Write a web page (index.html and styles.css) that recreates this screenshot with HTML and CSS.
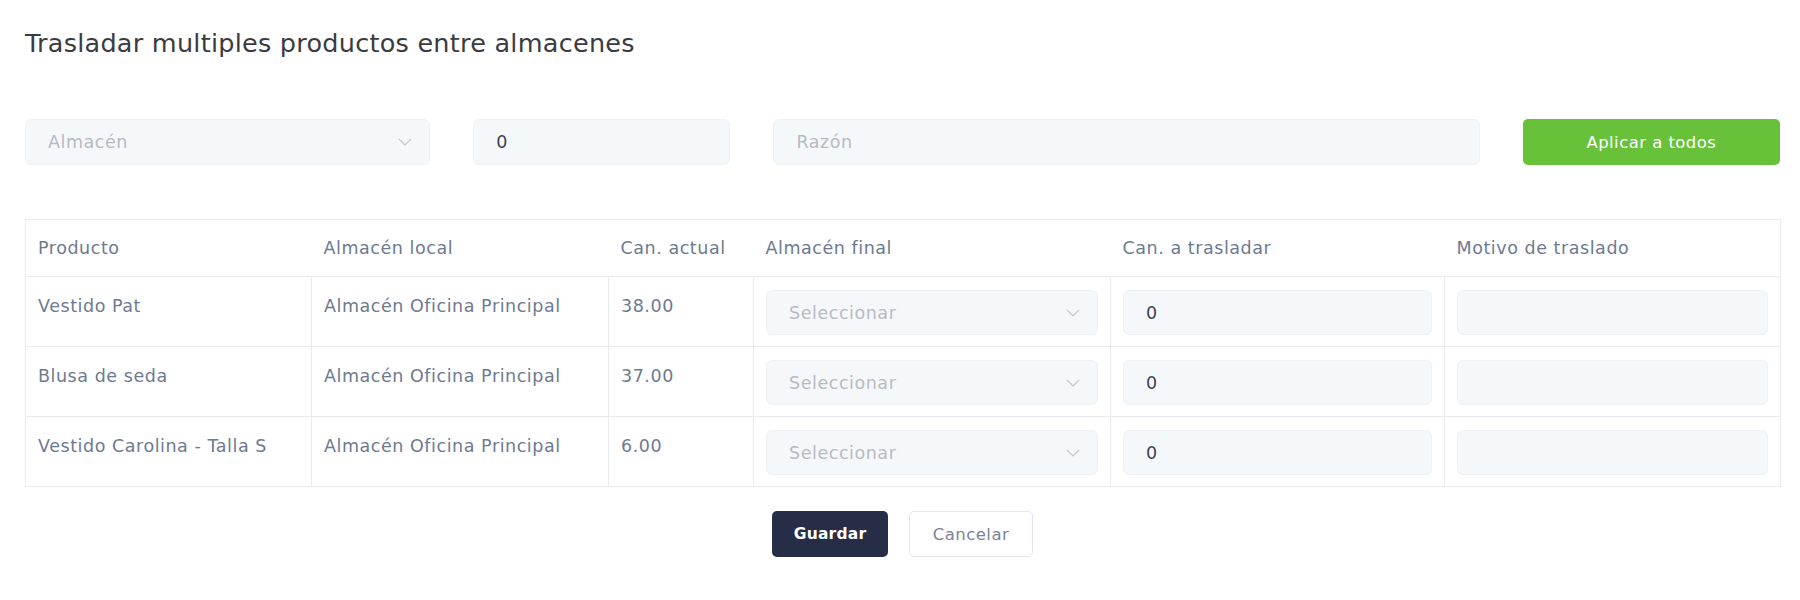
FILE: index.html
```html
<!DOCTYPE html>
<html lang="es">
<head>
<meta charset="utf-8">
<title>Trasladar multiples productos entre almacenes</title>
<link rel="stylesheet" href="styles.css">
</head>
<body>
<div class="page">
  <h1 class="title">Trasladar multiples productos entre almacenes</h1>

  <div class="filters">
    <div class="field select">
      <span class="placeholder">Almacén</span>
      <svg class="chev" width="14" height="8" viewBox="0 0 14 8"><polyline points="1,1 7,7 13,1" fill="none" stroke="#c4c6d0" stroke-width="1.2"/></svg>
    </div>
    <div class="field"><span class="value">0</span></div>
    <div class="field"><span class="placeholder">Razón</span></div>
    <button class="btn btn-green">Aplicar a todos</button>
  </div>

  <table class="grid">
    <colgroup>
      <col class="c1"><col class="c2"><col class="c3"><col class="c4"><col class="c5"><col class="c6">
    </colgroup>
    <thead>
      <tr>
        <th>Producto</th>
        <th>Almacén local</th>
        <th>Can. actual</th>
        <th>Almacén final</th>
        <th>Can. a trasladar</th>
        <th>Motivo de traslado</th>
      </tr>
    </thead>
    <tbody>
      <tr>
        <td class="txt">Vestido Pat</td>
        <td class="txt">Almacén Oficina Principal</td>
        <td class="txt">38.00</td>
        <td><div class="field select"><span class="placeholder">Seleccionar</span><svg class="chev" width="14" height="8" viewBox="0 0 14 8"><polyline points="1,1 7,7 13,1" fill="none" stroke="#c4c6d0" stroke-width="1.2"/></svg></div></td>
        <td><div class="field"><span class="value">0</span></div></td>
        <td><div class="field"></div></td>
      </tr>
      <tr>
        <td class="txt">Blusa de seda</td>
        <td class="txt">Almacén Oficina Principal</td>
        <td class="txt">37.00</td>
        <td><div class="field select"><span class="placeholder">Seleccionar</span><svg class="chev" width="14" height="8" viewBox="0 0 14 8"><polyline points="1,1 7,7 13,1" fill="none" stroke="#c4c6d0" stroke-width="1.2"/></svg></div></td>
        <td><div class="field"><span class="value">0</span></div></td>
        <td><div class="field"></div></td>
      </tr>
      <tr>
        <td class="txt">Vestido Carolina - Talla S</td>
        <td class="txt">Almacén Oficina Principal</td>
        <td class="txt">6.00</td>
        <td><div class="field select"><span class="placeholder">Seleccionar</span><svg class="chev" width="14" height="8" viewBox="0 0 14 8"><polyline points="1,1 7,7 13,1" fill="none" stroke="#c4c6d0" stroke-width="1.2"/></svg></div></td>
        <td><div class="field"><span class="value">0</span></div></td>
        <td><div class="field"></div></td>
      </tr>
    </tbody>
  </table>

  <div class="actions">
    <button class="btn btn-dark">Guardar</button>
    <button class="btn btn-light">Cancelar</button>
  </div>
</div>
</body>
</html>
```

FILE: styles.css
```css
* { box-sizing: border-box; }

html, body {
  margin: 0;
  padding: 0;
  background: #ffffff;
}

body {
  font-family: "DejaVu Sans", "Open Sans", sans-serif;
  font-size: 17.5px;
  letter-spacing: 0.55px;
  color: #6d7a92;
}

.page {
  width: 1800px;
  padding: 29px 20px 0 25px;
}

.title {
  margin: 0;
  font-size: 25.5px;
  letter-spacing: 0.25px;
  line-height: 29px;
  font-weight: 400;
  color: #3b3b40;
}

.filters {
  margin-top: 61px;
  display: grid;
  grid-template-columns: 405fr 257fr 706fr 257fr;
  column-gap: 43px;
}

.field {
  height: 46px;
  display: flex;
  align-items: center;
  padding: 0 17px 0 22px;
  background: #f5f8fa;
  border: 1px solid #eff2f5;
  border-radius: 6px;
}

.select { justify-content: space-between; }

.placeholder { color: #b8bac4; }
.value { color: #3f4254; }

.chev { display: block; flex: none; }

.btn {
  font-family: "DejaVu Sans", "Open Sans", sans-serif;
  font-size: 16.5px;
  letter-spacing: 0.45px;
  font-weight: 400;
  height: 46px;
  border-radius: 5px;
  border: 1px solid transparent;
  padding: 0;
  cursor: pointer;
}

.btn-green {
  background: #67c23a;
  color: #ffffff;
}

.grid {
  margin-top: 54px;
  width: 100%;
  table-layout: fixed;
  border-collapse: collapse;
  border: 1px solid #e9ebef;
}

.c1 { width: 286px; }
.c2 { width: 297px; }
.c3 { width: 145px; }
.c4 { width: 357px; }
.c5 { width: 334px; }
.c6 { width: 336px; }

.grid th {
  height: 57px;
  padding: 0 12px;
  text-align: left;
  font-weight: 400;
  color: #6d7a92;
  border-bottom: 1px solid #e9ebef;
}

.grid td {
  padding: 13px 12px 11px 12px;
  vertical-align: top;
  border-right: 1px solid #e9ebef;
  border-bottom: 1px solid #e9ebef;
  line-height: 24px;
}

.grid td.txt { padding-top: 17px; }

.grid td .field { height: 45px; }

.actions {
  margin-top: 24px;
  display: flex;
  justify-content: center;
  gap: 21px;
}

.btn-dark {
  width: 116px;
  background: #262d47;
  color: #ffffff;
  font-weight: 700;
  font-size: 15.5px;
  letter-spacing: 0.2px;
}

.btn-light {
  width: 124px;
  background: #ffffff;
  color: #7e8299;
  border-color: #e4e6ef;
}
```
